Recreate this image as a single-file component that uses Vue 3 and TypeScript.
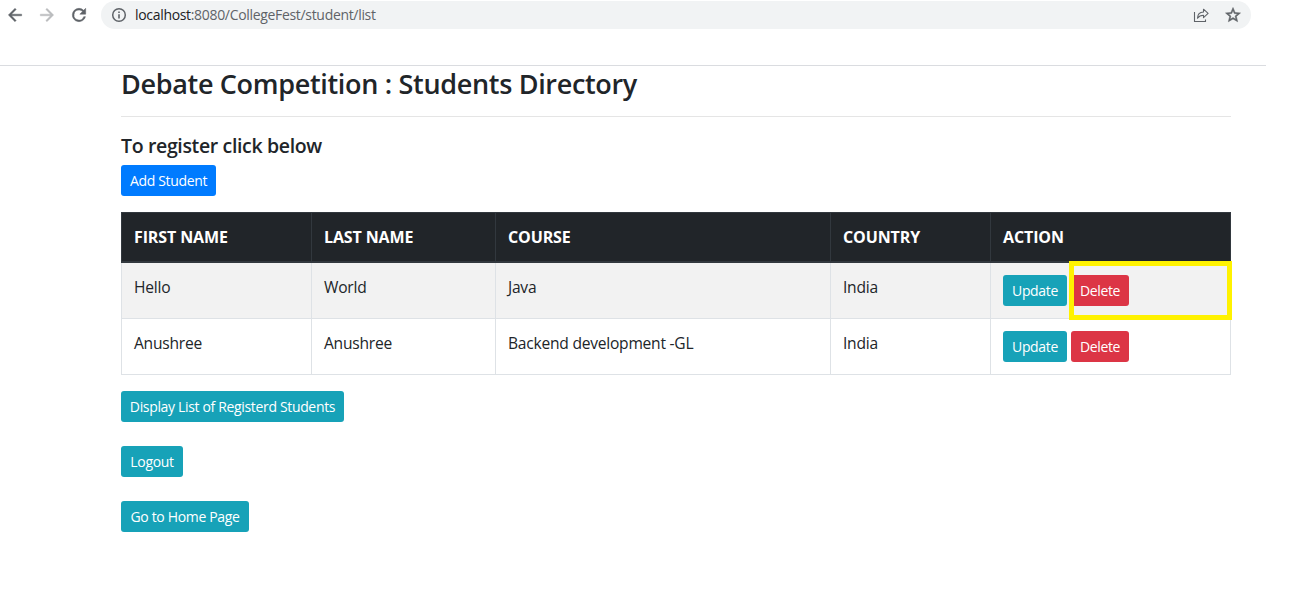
<script setup lang="ts">
interface Column {
  key: string
  label: string
}

interface Student {
  id: number
  firstName: string
  lastName: string
  course: string
  country: string
  highlighted: boolean
}

const columns: Column[] = [
  { key: 'first', label: 'FIRST NAME' },
  { key: 'last', label: 'LAST NAME' },
  { key: 'course', label: 'COURSE' },
  { key: 'country', label: 'COUNTRY' },
  { key: 'action', label: 'ACTION' },
]

const students: Student[] = [
  { id: 1, firstName: 'Hello', lastName: 'World', course: 'Java', country: 'India', highlighted: true },
  { id: 2, firstName: 'Anushree', lastName: 'Anushree', course: 'Backend development -GL', country: 'India', highlighted: false },
]
</script>

<template>
  <div class="window">
    <header class="toolbar">
      <svg class="nav" viewBox="0 0 24 24"><path fill="#5f6368" stroke="#5f6368" stroke-width=".5" d="M20 11H7.83l5.590-5.590L12 4l-8 8 8 8 1.410-1.410L7.830 13H20v-2z" /></svg>
      <svg class="nav" viewBox="0 0 24 24"><path fill="#babcbe" stroke="#babcbe" stroke-width=".5" d="M12 4l-1.410 1.410L16.170 11H4v2h12.170l-5.580 5.590L12 20l8-8z" /></svg>
      <svg class="nav" viewBox="0 0 24 24"><path fill="#5f6368" stroke="#5f6368" stroke-width=".6" d="M17.650 6.350A7.960 7.960 0 0 0 12 4a8 8 0 1 0 7.730 10h-2.080A6 6 0 1 1 12 6c1.660 0 3.140.690 4.220 1.780L13 11h7V4l-2.350 2.350z" /></svg>
      <div class="address">
        <svg class="info" viewBox="0 0 16 16"><circle cx="8" cy="8" r="6.3" fill="none" stroke="#5f6368" stroke-width="1.5" /><path fill="#5f6368" d="M7.200 4.400h1.600V6H7.200zM7.200 7.200h1.600v4.400H7.200z" /></svg>
        <span class="url"><b>localhost</b>:8080/CollegeFest/student/list</span>
        <svg class="share" viewBox="0 0 16 16" fill="none" stroke="#5f6368" stroke-width="1.1"><path d="M1.500 5v9.500h11V12.500" /><path stroke-linejoin="round" d="M4.500 11.200C4.600 7 7 5.100 10.500 5V2.200l4.600 4.200-4.600 4.200V8.200C8 8.200 6 9 4.500 11.200z" /></svg>
        <svg class="star" viewBox="0 0 24 24"><path fill="#5f6368" stroke="#5f6368" stroke-width=".7" d="M22 9.240l-7.190-.620L12 2 9.190 8.630 2 9.240l5.460 4.730L5.820 21 12 17.270 18.180 21l-1.630-7.030L22 9.240zM12 15.400l-3.760 2.270 1-4.280-3.320-2.880 4.380-.380L12 6.100l1.710 4.040 4.380.380-3.320 2.880 1 4.280L12 15.400z" /></svg>
      </div>
    </header>

    <main class="container">
      <h3>Debate Competition : Students Directory</h3>
      <hr />
      <h5>To register click below</h5>
      <button class="btn primary add">Add Student</button>

      <table>
        <colgroup>
          <col v-for="c in columns" :key="c.key" :class="c.key" />
        </colgroup>
        <thead>
          <tr>
            <th v-for="c in columns" :key="c.key">{{ c.label }}</th>
          </tr>
        </thead>
        <tbody>
          <tr v-for="s in students" :key="s.id">
            <td>{{ s.firstName }}</td>
            <td>{{ s.lastName }}</td>
            <td>{{ s.course }}</td>
            <td>{{ s.country }}</td>
            <td class="actions">
              <div class="pair">
                <button class="btn info-btn update">Update</button>
                <button class="btn danger delete">Delete</button>
              </div>
              <span v-if="s.highlighted" class="marker"></span>
            </td>
          </tr>
        </tbody>
      </table>

      <div class="links">
        <button class="btn info-btn display">Display List of Registerd Students</button>
        <button class="btn info-btn logout">Logout</button>
        <button class="btn info-btn home">Go to Home Page</button>
      </div>
    </main>
  </div>
</template>

<style>
body {
  margin: 0;
  background: #fff;
}
</style>

<style scoped>
.window {
  height: 596px;
  overflow: hidden;
  font-family: "Open Sans", "Noto Sans", sans-serif;
  font-size: 16px;
  line-height: 24px;
  color: #212529;
}

.toolbar {
  box-sizing: border-box;
  display: flex;
  width: 1266px;
  height: 66px;
  padding: 1px 15px 0 5px;
  border-bottom: 1px solid #dadce0;
}

.nav {
  width: 20px;
  height: 20px;
  margin: 4px 12px 0 0;
}

.address {
  box-sizing: border-box;
  display: flex;
  align-items: center;
  width: 1150px;
  height: 28px;
  padding: 0 9px 0 10px;
  border-radius: 14px;
  background: #f1f3f4;
}

.info {
  width: 16px;
  height: 16px;
  margin-right: 8px;
}

.url {
  flex: 1;
  font-size: 14px;
  letter-spacing: -0.32px;
  color: #5f6368;
}

.url b {
  font-weight: 400;
  color: #202124;
}

.share {
  width: 16px;
  height: 16px;
  margin-right: 15px;
}

.star {
  width: 18px;
  height: 18px;
}

.container {
  width: 1110px;
  margin-left: 121px;
}

h3 {
  margin: 0;
  padding-top: 1px;
  font-size: 27px;
  font-weight: 600;
  line-height: 34px;
  letter-spacing: -0.32px;
  white-space: nowrap;
}

hr {
  height: 1px;
  margin: 15px 0 17px;
  border: 0;
  background: #e5e5e5;
}

h5 {
  margin: 0 0 7px;
  font-size: 19.5px;
  font-weight: 600;
  line-height: 24px;
  letter-spacing: -0.35px;
}

.btn {
  box-sizing: border-box;
  display: block;
  height: 31px;
  padding: 0;
  border: 0;
  border-radius: 3px;
  color: #fff;
  font-family: inherit;
  font-size: 14px;
  line-height: 31px;
  letter-spacing: -0.34px;
  text-align: center;
  white-space: nowrap;
}

.primary { background: #007bff; }
.info-btn { background: #17a2b8; }
.danger { background: #dc3545; }

.add { width: 95px; }
.update { width: 64px; }
.delete { width: 58px; }
.display { width: 223px; }
.logout { width: 62px; }
.home { width: 128px; }

table {
  width: 1110px;
  margin: 16px 0;
  border-collapse: collapse;
  table-layout: fixed;
}

col.first { width: 190px; }
col.last { width: 184px; }
col.course { width: 335px; }
col.country { width: 160px; }
col.action { width: 240px; }

th,
td {
  padding: 12px;
  border: 1px solid #dee2e6;
  text-align: left;
  vertical-align: top;
  white-space: nowrap;
}

td {
  font-size: 15.6px;
  letter-spacing: -0.24px;
}

th {
  border-color: #32383e;
  border-bottom-width: 2px;
  background: #212529;
  color: #fff;
  font-weight: 700;
  letter-spacing: -0.12px;
}

tbody tr:nth-child(odd) {
  background: #f2f2f2;
}

.actions {
  position: relative;
}

.pair {
  display: flex;
  gap: 4px;
}

/* Annotation frame laid over the delete action */
.marker {
  position: absolute;
  top: -2px;
  right: -2px;
  box-sizing: border-box;
  width: 163px;
  height: 59px;
  border: 5px solid #fff200;
}

.links {
  display: flex;
  flex-direction: column;
  gap: 24px;
}
</style>
